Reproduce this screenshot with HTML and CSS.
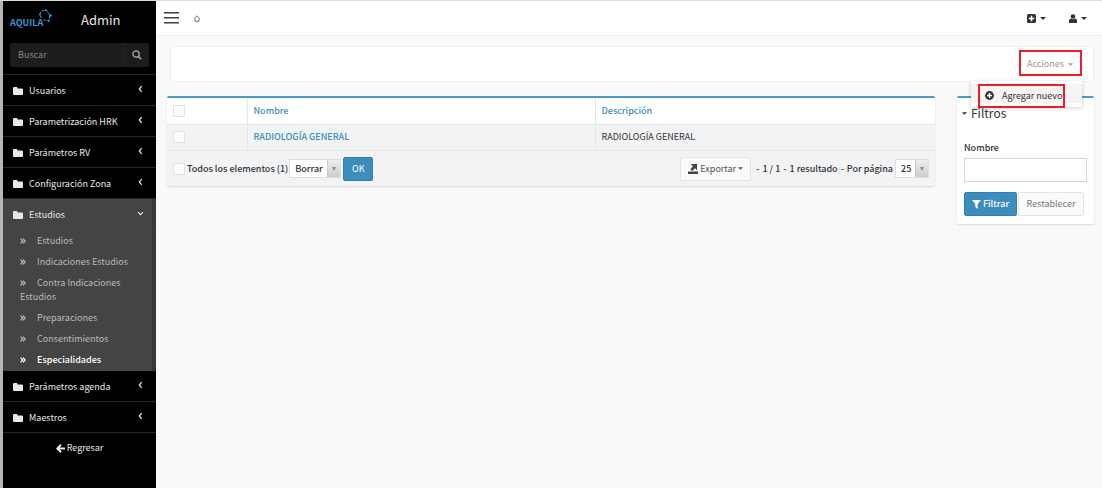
FILE: index.html
```html
<!DOCTYPE html>
<html lang="es">
<head>
<meta charset="utf-8">
<title>Admin - Especialidades</title>
<link rel="stylesheet" href="styles.css">
</head>
<body>
<svg class="defs" aria-hidden="true">
  <symbol id="folder" viewBox="0 0 20 16"><path d="M0 2a2 2 0 0 1 2-2h5a2 2 0 0 1 2 2v1h9a2 2 0 0 1 2 2v9a2 2 0 0 1-2 2H2a2 2 0 0 1-2-2z"/></symbol>
  <symbol id="left" viewBox="0 0 6 10"><path d="M4.500 1.500 1.500 5l3 3.500" fill="none" stroke="currentColor" stroke-width="1.500"/></symbol>
  <symbol id="down" viewBox="0 0 10 6"><path d="M1.500 1 5 4.500 8.500 1" fill="none" stroke="currentColor" stroke-width="1.700"/></symbol>
  <symbol id="double" viewBox="0 0 10 10"><path d="M1 1l3.500 4L1 9M5 1l3.500 4L5 9" fill="none" stroke="currentColor" stroke-width="2"/></symbol>
  <symbol id="caret" viewBox="0 0 8 4"><path d="M0 0h8L4 4z"/></symbol>
  <symbol id="arrow" viewBox="0 0 6 6"><path d="M0 0h6L3 6z"/></symbol>
</svg>
<div class="app">
  <aside class="sidebar">
    <div class="brand">
      <svg class="logo" viewBox="0 0 42 22" role="img" aria-label="Aquila">
        <text class="logo-text" x="0" y="17">AQUILA</text>
        <path d="M31.500 9 29.500 5.500l2-3.500 5-1L40 6.500l-1.500 5.500-5-1" fill="none" stroke="#3a94d4" stroke-width="1" stroke-dasharray="3 1"/>
        <circle cx="40.500" cy="6.500" r="1.300" fill="#3a94d4"/><circle cx="36" cy="1.300" r="1" fill="#3a94d4"/><circle cx="38.800" cy="12" r="1" fill="#3a94d4"/><circle cx="30" cy="5.500" r="1" fill="#3a94d4"/>
      </svg>
      <span class="brand-name">Admin</span>
    </div>
    <form class="search">
      <input type="text" placeholder="Buscar" aria-label="Buscar">
      <button type="button" aria-label="Buscar"><svg width="10" height="10" viewBox="0 0 11 11"><circle cx="4.500" cy="4.500" r="3.500" fill="none" stroke="currentColor" stroke-width="1.600"/><path d="M7 7l3 3" stroke="currentColor" stroke-width="2"/></svg></button>
    </form>
    <nav class="menu">
      <a class="item" href="#"><svg class="folder"><use href="#folder"/></svg><span>Usuarios</span><svg class="left"><use href="#left"/></svg></a>
      <a class="item" href="#"><svg class="folder"><use href="#folder"/></svg><span>Parametrización HRK</span><svg class="left"><use href="#left"/></svg></a>
      <a class="item" href="#"><svg class="folder"><use href="#folder"/></svg><span>Parámetros RV</span><svg class="left"><use href="#left"/></svg></a>
      <a class="item" href="#"><svg class="folder"><use href="#folder"/></svg><span>Configuración Zona</span><svg class="left"><use href="#left"/></svg></a>
      <a class="item open" href="#"><svg class="folder"><use href="#folder"/></svg><span>Estudios</span><svg class="down"><use href="#down"/></svg></a>
      <div class="submenu">
        <a href="#"><svg><use href="#double"/></svg>Estudios</a>
        <a href="#"><svg><use href="#double"/></svg>Indicaciones Estudios</a>
        <a href="#"><svg><use href="#double"/></svg>Contra Indicaciones Estudios</a>
        <a href="#"><svg><use href="#double"/></svg>Preparaciones</a>
        <a href="#"><svg><use href="#double"/></svg>Consentimientos</a>
        <a href="#" class="current"><svg><use href="#double"/></svg>Especialidades</a>
      </div>
      <a class="item" href="#"><svg class="folder"><use href="#folder"/></svg><span>Parámetros agenda</span><svg class="left"><use href="#left"/></svg></a>
      <a class="item" href="#"><svg class="folder"><use href="#folder"/></svg><span>Maestros</span><svg class="left"><use href="#left"/></svg></a>
    </nav>
    <a class="back" href="#"><svg width="9" height="9" viewBox="0 0 9 9"><path d="M9 4.500H2M5 .8 1.300 4.500 5 8.200" fill="none" stroke="currentColor" stroke-width="2"/></svg>Regresar</a>
  </aside>
  <div class="main">
    <header class="topbar">
      <button class="burger" type="button" aria-label="Menú"><span></span><span></span><span></span></button>
      <a class="home" href="#" aria-label="Inicio"><svg width="6" height="7" viewBox="0 0 6 7"><path d="M.4 3.600 3 .8l2.600 2.800M1 3.300v3h4v-3" fill="none" stroke="#555" stroke-width=".8"/></svg></a>
      <div class="tools">
        <button type="button" aria-label="Agregar"><svg width="9" height="9" viewBox="0 0 9 9"><rect width="9" height="9" rx="1.500" fill="#333"/><path d="M4.500 1.800v5.400M1.800 4.500h5.400" stroke="#fff" stroke-width="1.500"/></svg><svg class="caret"><use href="#caret"/></svg></button>
        <button type="button" aria-label="Usuario"><svg width="8" height="9" viewBox="0 0 8 9"><circle cx="4" cy="2.500" r="2.300" fill="#333"/><path d="M0 9V7c0-1.600.8-2.500 2-2.600 1 1 3 1 4 0C7.200 4.500 8 5.400 8 7v2z" fill="#333"/></svg><svg class="caret"><use href="#caret"/></svg></button>
      </div>
    </header>
    <div class="actions">
      <div class="dropdown">
        <button class="toggle" type="button" aria-expanded="true">Acciones <svg class="caret"><use href="#caret"/></svg></button>
        <div class="popup"><a href="#"><svg width="9" height="9" viewBox="0 0 9 9"><circle cx="4.500" cy="4.500" r="4.400" fill="#333"/><path d="M4.500 2v5M2 4.500h5" stroke="#fff" stroke-width="1.500"/></svg>Agregar nuevo</a></div>
      </div>
    </div>
    <div class="columns">
      <section class="box list">
        <table>
          <thead><tr><th class="check"><input type="checkbox" aria-label="Seleccionar todos"></th><th><a href="#">Nombre</a></th><th class="desc"><a href="#">Descripción</a></th></tr></thead>
          <tbody><tr><td><input type="checkbox" aria-label="Seleccionar Radiología General"></td><td><a class="strong" href="#">RADIOLOGÍA GENERAL</a></td><td>RADIOLOGÍA GENERAL</td></tr></tbody>
        </table>
        <div class="list-foot">
          <label class="all"><input type="checkbox">Todos los elementos (1)</label>
          <span class="pick batch"><select aria-label="Acción"><option>Borrar</option></select><svg><use href="#arrow"/></svg></span>
          <button class="btn primary ok" type="button">OK</button>
          <div class="pager">
            <button class="btn export" type="button"><svg width="10" height="10" viewBox="0 0 10 10"><path d="M2.500 0H9v6L7 4.300 4.300 7 2.300 5.200 5 2.300zM0 7.500h10V10H0z" fill="#444"/></svg>Exportar <svg class="caret"><use href="#caret"/></svg></button>
            <span>-</span><span>1 / 1</span><span>-</span><span>1 resultado</span><span>-</span>
            <label for="per-page">Por página</label>
            <span class="pick page"><select id="per-page"><option>25</option></select><svg><use href="#arrow"/></svg></span>
          </div>
        </div>
      </section>
      <form class="box filters">
        <h2><svg class="caret"><use href="#caret"/></svg>Filtros</h2>
        <label for="name">Nombre</label>
        <input id="name" type="text">
        <div class="filter-buttons">
          <button class="btn primary" type="button"><svg width="9" height="9" viewBox="0 0 9 9"><path d="M0 0h9L5.700 4v5L3.300 7V4z" fill="#fff"/></svg>Filtrar</button>
          <button class="btn reset" type="reset">Restablecer</button>
        </div>
      </form>
    </div>
  </div>
</div>
</body>
</html>
```
FILE: styles.css
```css
* { box-sizing: border-box; }
body {
  margin: 0;
  background: #f9f9f9;
  color: #333;
  font: 9px/14px "Noto Sans CJK SC", "Open Sans", sans-serif;
}
a { color: inherit; text-decoration: none; }
button, input, select { font: inherit; color: inherit; margin: 0; }
button { cursor: pointer; }
svg { flex: none; fill: currentColor; }
.defs { display: none; }
.caret { width: 6px; height: 3px; }

.app {
  display: grid;
  grid-template-columns: 156px 1fr;
  min-height: 100vh;
  border-top: 1px solid #dcdcdc;
}
.sidebar {
  background: #000;
  color: #e8e8e8;
  border-left: 3px solid #b4b8b4;
}
.brand { display: flex; align-items: center; height: 38px; padding-left: 7px; }
.logo { width: 42px; height: 22px; overflow: visible; }
.logo-text { font: bold 9px/14px "Noto Sans CJK SC", sans-serif; fill: #3a94d4; }
.brand-name { margin-left: 29px; font-size: 13px; line-height: 20px; }
.search { display: flex; height: 24px; margin: 4px 7px 7px; background: #1c1c1c; border-radius: 2px; }
.search input { flex: 1; min-width: 0; padding: 0 8px; border: 0; background: none; outline: 0; }
.search input::placeholder { color: #888; opacity: 1; }
.search button { display: grid; place-items: center; width: 25px; padding: 0; border: 0; border-left: 1px solid #262626; background: none; color: #999; }
.menu { border-top: 1px solid #262626; }
.item { display: flex; align-items: center; height: 31px; padding: 1px 13px 0 10px; border-bottom: 1px solid #262626; }
.item span { flex: 1; margin-left: 6px; }
.folder { width: 10px; height: 8px; }
.left { width: 5px; height: 8px; margin-bottom: 4px; }
.down { width: 7px; height: 5px; margin: 0 -1px 4px 0; }
.open { height: 32px; border-color: #444; }
.open, .submenu { background: #444; border-right: 4px solid #383838; }
.open { padding-right: 9px; }
.submenu a { display: block; padding: 3px 16px 4px 17px; color: #bbb; }
.submenu svg { width: 6px; height: 6px; margin-right: 11px; }
.submenu .current { color: #fff; font-weight: 500; }
.back { display: flex; justify-content: center; align-items: center; gap: 2px; padding-top: 8px; }

.main { min-width: 0; }
.topbar { display: flex; align-items: center; height: 35px; padding: 0 15px 0 8px; background: #fff; border-bottom: 1px solid #eee; }
.burger { display: grid; gap: 3px; width: 15px; padding: 0; border: 0; background: none; }
.burger span { height: 2px; background: linear-gradient(#444 50%, #999 50%); }
.home { display: flex; margin-left: 15px; }
.tools { display: flex; gap: 23px; margin-left: auto; }
.tools button { display: flex; align-items: center; gap: 4px; padding: 0; border: 0; background: none; }
.actions { display: flex; justify-content: flex-end; height: 36px; margin: 10px 8px 14px 14px; padding: 3px 11px; background: #fff; border: 1px solid #eee; border-radius: 3px; }
.dropdown { position: relative; }
.toggle { display: flex; align-items: center; gap: 4px; height: 26px; padding: 2px 7px 0 6px; border: 2px solid #f01c24; background: none; color: #999; }
.toggle .caret { width: 5px; }
.popup { position: absolute; z-index: 2; top: 31px; right: 0; width: 111px; height: 26px; padding: 3px 17px 0 7px; background: linear-gradient(#fff 3px, #f4f4f4 3px, #f4f4f4 22px, #fff 22px); box-shadow: 0 1px 4px #0003; }
.popup a { display: flex; align-items: center; gap: 8px; height: 24px; padding: 0 0 1px 5px; border: 2px solid #f01c24; white-space: nowrap; }

.columns { display: grid; grid-template-columns: 1fr 137px; align-items: start; gap: 22px; padding: 0 8px 0 11px; }
.box { background: #fff; border-top: 2px solid #4a9bc8; border-radius: 2px; box-shadow: 0 1px 2px #0002; }
table { width: 100%; border-collapse: collapse; table-layout: fixed; }
th, td { height: 26px; padding: 0 6px; text-align: left; border-bottom: 1px solid #e6e6e6; font-weight: 400; }
th + th, td + td { border-left: 1px solid #e6e6e6; }
tbody, .list-foot { background: #f2f3f5; }
th a, .strong { color: #3c8dbc; font-weight: 500; }
.check { width: 80px; }
.desc { width: 340px; }
input[type="checkbox"] { appearance: none; display: block; flex: none; width: 12px; height: 12px; background: #fbfcfc; border: 1px solid #e2e2e2; }
.list-foot { display: flex; align-items: center; height: 35px; padding: 1px 6px 0; font-weight: 500; white-space: nowrap; }
.all { display: flex; align-items: center; gap: 2px; }
.pick { position: relative; display: flex; }
.pick select { appearance: none; height: 19px; padding: 0 6px; border: 1px solid #ddd; border-radius: 0; background: linear-gradient(#ccc, #ccc) right 12px top / 1px 100% no-repeat, linear-gradient(#eee, #ccc) right / 12px 100% no-repeat, #fff; font-weight: 500; }
.pick svg { position: absolute; right: 5px; top: 8px; width: 4px; height: 4px; color: #888; pointer-events: none; }
.batch { margin: 0 2px 0 1px; }
.batch select { width: 52px; padding: 0 5px; }
.page select { width: 34px; padding: 0 5px; }
.btn { display: flex; align-items: center; justify-content: center; gap: 2px; height: 24px; padding: 0 8px; border: 1px solid #e4e4e4; border-radius: 2px; background: #fafafa; color: #555; font-weight: 400; white-space: nowrap; }
.btn.primary { border-color: #367fa9; background: #3c8dbc; color: #fff; }
.btn.ok { width: 30px; }
.pager { display: flex; align-items: center; gap: 3px; margin-left: auto; }
.pager label { margin-right: -1px; }
.export { width: 71px; margin-right: 2px; }
.export .caret { width: 5px; }
.filters { padding: 7px 7px 8px; }
.filters h2 { display: flex; align-items: center; gap: 4px; margin: 0 0 20px -2px; font-size: 12px; line-height: 16px; font-weight: 400; }
.filters h2 .caret { width: 5px; height: 3px; }
.filters label { display: block; margin-bottom: 3px; font-weight: 500; }
.filters input { display: block; width: 100%; height: 24px; padding: 0 6px; border: 1px solid #d6d6d6; background: #fff; }
.filter-buttons { display: flex; gap: 1px; margin-top: 10px; }
.filter-buttons .primary { width: 53px; font-weight: 500; }
.filter-buttons .reset { width: 66px; color: #777; }
```
